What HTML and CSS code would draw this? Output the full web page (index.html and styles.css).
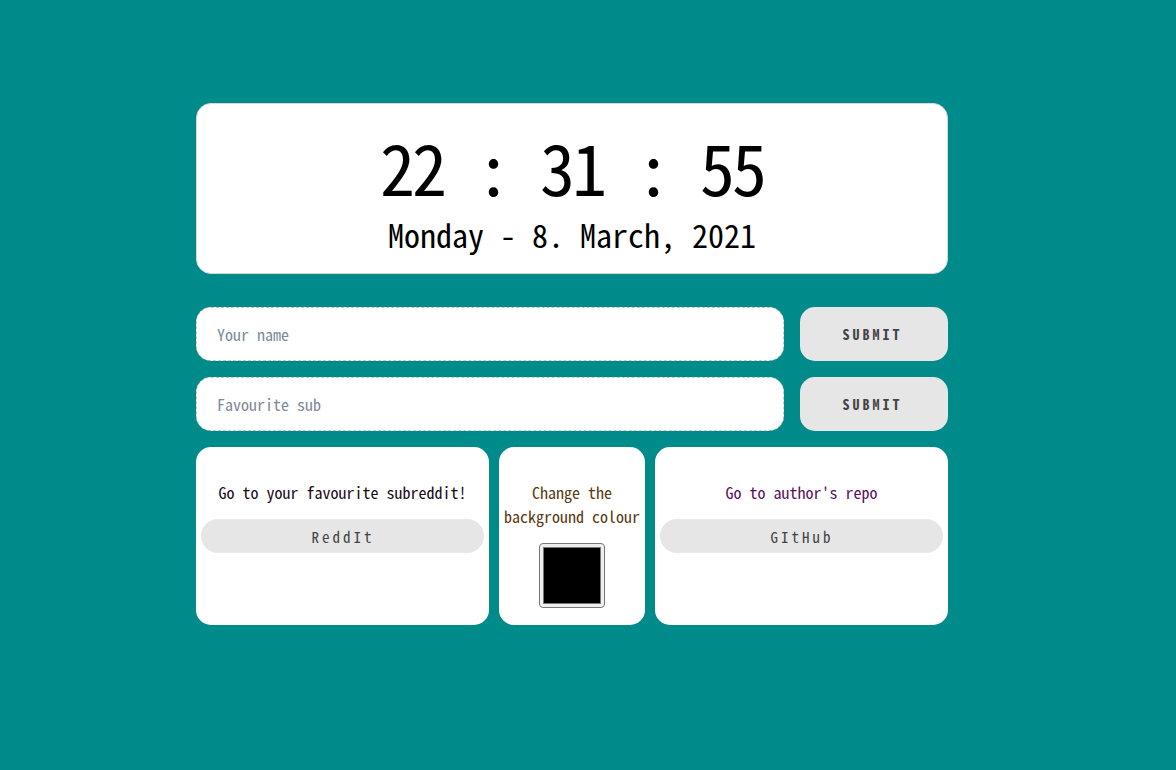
FILE: index.html
```html
<!DOCTYPE html>
<html lang="en">
<head>
<meta charset="utf-8">
<title>Clock</title>
<link rel="stylesheet" href="styles.css">
</head>
<body>
<main class="page">
  <section class="clock-card">
    <div class="time">22 : 31 : 55</div>
    <div class="date">Monday - 8. March, 2021</div>
  </section>
  <form class="field-row">
    <input class="field" type="text" placeholder="Your name">
    <button class="submit" type="button">SUBMIT</button>
  </form>
  <form class="field-row">
    <input class="field" type="text" placeholder="Favourite sub">
    <button class="submit" type="button">SUBMIT</button>
  </form>
  <section class="tiles">
    <div class="tile">
      <p class="tile-text t-dark">Go to your favourite subreddit!</p>
      <button class="pill" type="button">ReddIt</button>
    </div>
    <div class="tile tile-narrow">
      <p class="tile-text t-brown">Change the background colour</p>
      <input class="swatch" type="color" value="#000000">
    </div>
    <div class="tile">
      <p class="tile-text t-purple">Go to author's repo</p>
      <button class="pill" type="button">GItHub</button>
    </div>
  </section>
</main>
</body>
</html>
```

FILE: styles.css
```css
* { box-sizing: border-box; }
html, body { margin: 0; padding: 0; }
body {
  background: #008b8b;
  font-family: "Noto Sans Mono CJK SC", "Liberation Mono", monospace;
  width: 1176px;
  height: 770px;
  overflow: hidden;
}
.page {
  width: 752px;
  margin-left: 196px;
  padding-top: 103px;
  display: flex;
  flex-direction: column;
}
.clock-card {
  background: #fff;
  border: 1px solid #d8d8d8;
  border-radius: 15px;
  height: 171px;
  flex: 0 0 171px;
  padding-top: 22px;
  display: flex;
  flex-direction: column;
  align-items: center;
  color: #000;
}
.time {
  font-size: 70px;
  line-height: 80px;
  letter-spacing: -3px;
  height: 80px;
}
.date {
  margin-top: 8px;
  font-size: 32px;
  line-height: 40px;
  height: 40px;
}
.field-row {
  margin: 33px 0 0;
  display: flex;
  gap: 16px;
  height: 54px;
}
.field-row + .field-row { margin-top: 16px; }
.field {
  flex: 1;
  height: 54px;
  border: 1px dashed #c8c8c8;
  border-radius: 15px;
  background: #fff;
  padding: 0 20px;
  font-family: inherit;
  font-size: 16px;
  outline: none;
}
.field::placeholder { color: #7d8a99; }
.submit {
  width: 148px;
  height: 54px;
  border: none;
  border-radius: 15px;
  background: #e6e6e6;
  color: #444;
  font-family: inherit;
  font-size: 14px;
  font-weight: bold;
  letter-spacing: 3px;
  padding: 0 3px 0 0;
}
.tiles {
  margin-top: 16px;
  display: flex;
  gap: 10px;
  height: 178px;
}
.tile {
  flex: 0 0 293px;
  background: #fff;
  border-radius: 15px;
  padding: 33px 5px 0;
  display: flex;
  flex-direction: column;
  align-items: center;
}
.tile-narrow { flex: 0 0 146px; padding-left: 2px; padding-right: 2px; }
.tile-text {
  margin: 0;
  font-size: 16px;
  line-height: 24px;
  text-align: center;
}
.t-dark { color: #1a0a1a; }
.t-brown { color: #5a3a10; }
.t-purple { color: #5a1060; }
.pill {
  margin-top: 15px;
  width: 100%;
  height: 34px;
  border: none;
  border-radius: 17px;
  background: #e6e6e6;
  color: #444;
  font-family: inherit;
  font-size: 15px;
  letter-spacing: 3px;
  padding: 0 0 0 1px;
}
.swatch {
  margin-top: 15px;
  width: 66px;
  height: 65px;
  padding: 3px;
  border: 1px solid #777;
  border-radius: 4px;
  background: #efefef;
  -webkit-appearance: none;
  appearance: none;
}
.swatch::-webkit-color-swatch-wrapper { padding: 0; }
.swatch::-webkit-color-swatch { border: 1px solid #777; border-radius: 0; }
```
